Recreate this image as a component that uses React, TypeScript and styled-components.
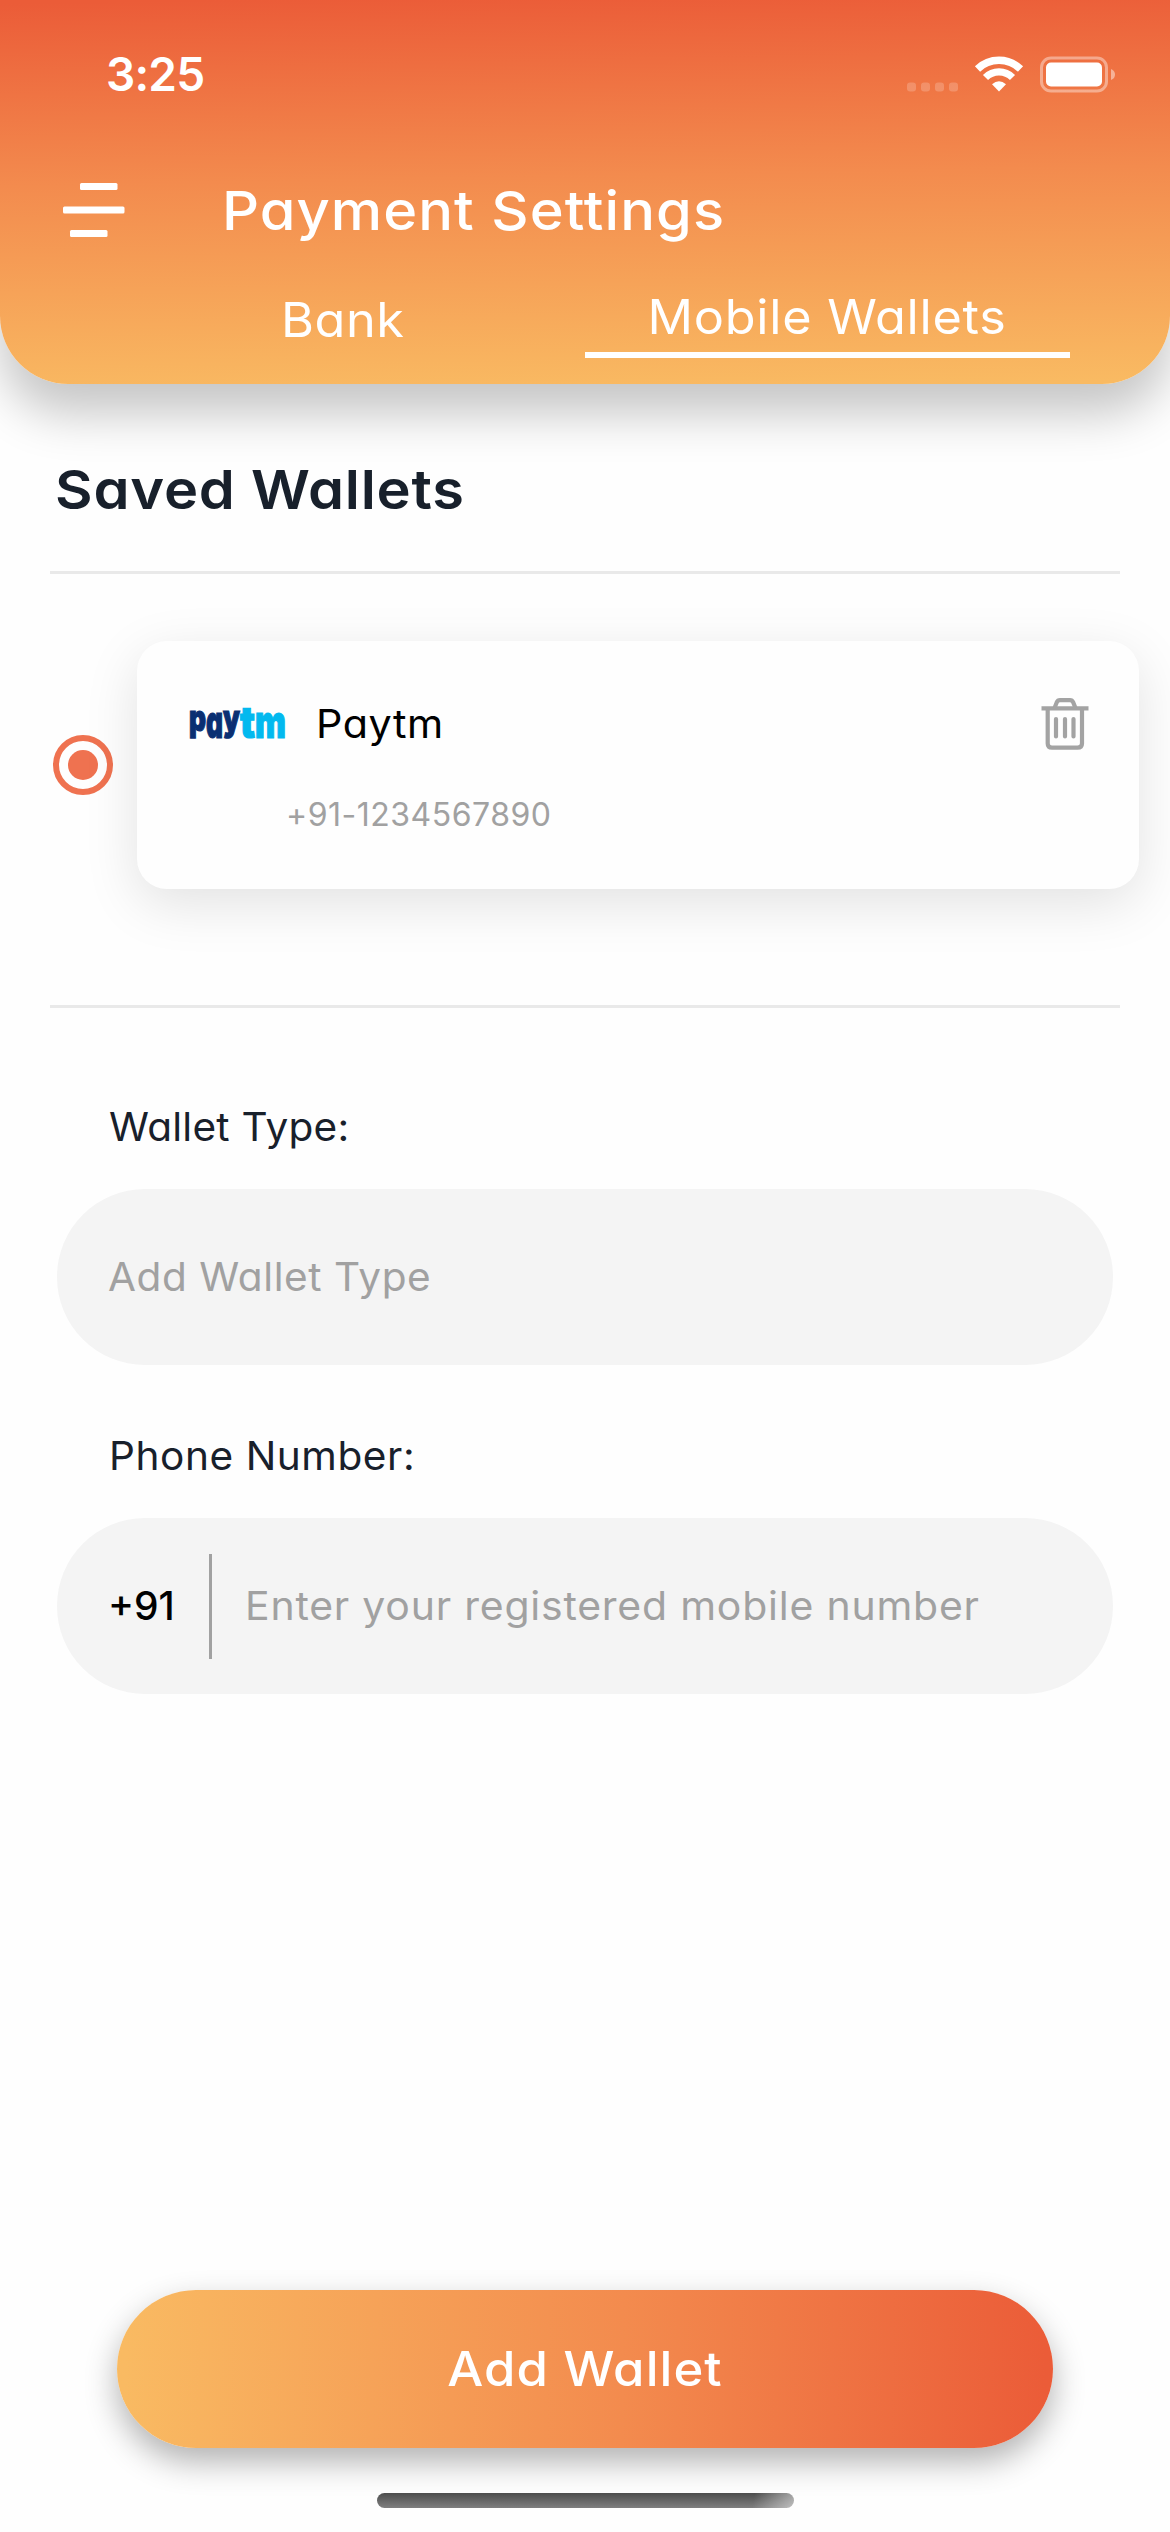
import React from "react";
import styled, { createGlobalStyle } from "styled-components";

const GlobalStyle = createGlobalStyle`
  * { box-sizing: border-box; }
  html, body { margin: 0; padding: 0; background: #fefefe; }
  body { font-family: "Inter", "Open Sans", sans-serif; }
`;

const Screen = styled.div`
  width: 1170px;
  height: 2532px;
  overflow: hidden;
  display: flex;
  flex-direction: column;
  background: #fefefe;
  font-feature-settings: "cv11";
`;

const Header = styled.header`
  height: 384px;
  flex: none;
  border-radius: 0 0 68px 68px;
  background: linear-gradient(179deg, #eb5c38 1%, #f38b4e 46%, #f9ba62 99%);
  box-shadow: 0 30px 48px rgba(0, 0, 0, 0.225);
  color: #fff;
`;

const StatusBar = styled.div`
  height: 149px;
  padding: 0 55px 0 106px;
  display: flex;
  align-items: center;
  justify-content: space-between;
`;

interface LabelProps {
  $size: number;
  $weight?: number;
  $spacing?: number;
  $stretch?: number;
  $centered?: boolean;
  $color?: string;
}

const Label = styled.span<LabelProps>`
  display: inline-block;
  font-size: ${(p) => p.$size}px;
  font-weight: ${(p) => p.$weight ?? 400};
  letter-spacing: ${(p) => p.$spacing ?? 0}px;
  color: ${(p) => p.$color ?? "inherit"};
  transform: scaleX(${(p) => p.$stretch ?? 1});
  transform-origin: ${(p) => (p.$centered ? "center" : "left")};
  line-height: 1.2;
  white-space: nowrap;
`;

const TitleRow = styled.div`
  height: 124px;
  padding-left: 63px;
  display: flex;
  align-items: center;
  gap: 97px;
`;

const Tabs = styled.nav`
  height: 85px;
  padding: 0 100px;
  display: grid;
  grid-template-columns: 1fr 1fr;
`;

const Tab = styled.div<{ $active?: boolean }>`
  display: flex;
  align-items: center;
  justify-content: center;
  padding-top: ${(p) => (p.$active ? 8 : 15)}px;
  border-bottom: 6px solid ${(p) => (p.$active ? "#fff" : "transparent")};
`;

const SectionTitle = styled.h1`
  margin: 0;
  height: 187px;
  padding: 25px 0 0 55px;
  display: flex;
  align-items: center;
  color: #18202b;
  font-weight: 600;
`;

const Divider = styled.div`
  height: 3px;
  flex: none;
  margin: 0 50px;
  background: #e9e9e9;
`;

const WalletRow = styled.div`
  height: 431px;
  padding: 67px 31px 116px 53px;
  display: flex;
  align-items: center;
  gap: 24px;
`;

const Radio = styled.div`
  width: 60px;
  height: 60px;
  flex: none;
  border: 6px solid #ef7250;
  border-radius: 50%;
  display: grid;
  place-items: center;
  &::after {
    content: "";
    width: 30px;
    height: 30px;
    border-radius: 50%;
    background: #ef7250;
  }
`;

const Card = styled.div`
  flex: 1;
  height: 248px;
  border-radius: 30px;
  background: #fefefe;
  box-shadow: 0 15px 54px rgba(0, 0, 0, 0.115);
  padding: 49px 50px 0 52px;
`;

const CardTop = styled.div`
  height: 68px;
  display: flex;
  align-items: center;
`;

const CardName = styled.div`
  flex: 1;
  padding-left: 29px;
  display: flex;
`;

const CardNumber = styled.div`
  height: 114px;
  padding-left: 97px;
  display: flex;
  align-items: center;
`;

const Form = styled.section`
  padding: 88px 57px 0;
  flex: 1;
`;

const FieldLabel = styled.div`
  height: 62px;
  padding-left: 52px;
  display: flex;
  align-items: center;
  color: #18202b;
`;

const Field = styled.div`
  height: 176px;
  margin: 31px 0 60px;
  padding: 0 0 0 51px;
  border-radius: 88px;
  background: #f4f4f4;
  display: flex;
  align-items: center;
`;

const CodeCell = styled.div`
  width: 104px;
  height: 105px;
  margin-right: 33px;
  border-right: 3px solid #a1a1a1;
  display: flex;
  align-items: center;
`;

const Footer = styled.footer`
  flex: none;
  height: 242px;
  display: flex;
  flex-direction: column;
  align-items: center;
  gap: 45px;
`;

const AddButton = styled.button`
  width: 936px;
  height: 158px;
  border: 0;
  padding: 0;
  border-radius: 79px;
  color: #fff;
  font-family: inherit;
  font-feature-settings: inherit;
  background: linear-gradient(91deg, #f9ba62 1%, #f38b4e 54%, #eb5c38 99%);
  box-shadow: 0 14px 32px rgba(0, 0, 0, 0.3);
`;

const HomeBar = styled.div`
  width: 417px;
  height: 15px;
  border-radius: 8px;
  background: linear-gradient(100deg, transparent 90%, rgba(255, 255, 255, 0.5) 100%),
    linear-gradient(#4d4d4d, #7f7f7f);
`;

const LogoSvg = styled.svg`
  overflow: visible;
  flex: none;
  font-family: "Inter", sans-serif;
  font-weight: 900;
`;

const MenuSvg = styled.svg`
  flex: none;
  margin-bottom: 2px;
`;

const StatusIcons = () => (
  <svg width="208" height="40" viewBox="907 54.5 208 40" fill="#fff">
    {[907, 921, 935, 949].map((x) => (
      <rect key={x} x={x} y="82" width="9" height="9" rx="3" opacity=".2" />
    ))}
    <g fill="none" stroke="#fff">
      <path d="M977.5 68.5A31 31 0 0 1 1020.500 68.500" strokeWidth="7.500" />
      <path d="M985.5 77A19 19 0 0 1 1012.500 77" strokeWidth="7.200" />
    </g>
    <path d="M999 91L992 83.800Q999 77.500 1006 83.800Z" />
    <rect x="1041.500" y="57.500" width="65" height="33" rx="9.500" fill="none" stroke="#fff" strokeWidth="3" opacity=".4" />
    <rect x="1046" y="62" width="56" height="24" rx="5" />
    <path d="M1111 68.500Q1115 70 1115 74T1111 79.500Z" opacity=".45" />
  </svg>
);

const MenuIcon = () => (
  <MenuSvg width="62" height="54" viewBox="0 0 62 54" fill="#fff">
    <rect x="17" y="0" width="37.500" height="7" rx="1.500" />
    <rect x="0" y="23.500" width="61.500" height="7" rx="1.500" />
    <rect x="7" y="47" width="37.500" height="7" rx="1.500" />
  </MenuSvg>
);

const LOGO_LETTERS = [
  { ch: "p", x: 0, y: 25, w: 17, size: 36, fill: "#0a2f72" },
  { ch: "a", x: 17, y: 32, w: 17, size: 46, fill: "#0a2f72" },
  { ch: "y", x: 34, y: 25, w: 17, size: 36, fill: "#0a2f72" },
  { ch: "t", x: 51, y: 32, w: 15, size: 43, fill: "#02b9ef" },
  { ch: "m", x: 66, y: 32, w: 31, size: 46, fill: "#02b9ef" },
];

const PaytmLogo = () => (
  <LogoSvg width="98" height="36" viewBox="0 0 98 36">
    <text>
      {LOGO_LETTERS.map((l) => (
        <tspan
          key={l.ch}
          x={l.x}
          y={l.y}
          fontSize={l.size}
          fill={l.fill}
          stroke={l.fill}
          strokeWidth="1.2"
          textLength={l.w}
          lengthAdjust="spacingAndGlyphs"
        >
          {l.ch}
        </tspan>
      ))}
    </text>
  </LogoSvg>
);

const TrashIcon = () => (
  <svg width="48" height="52" viewBox="0 0 48 52" fill="none" stroke="#a3a3a3" strokeWidth="4.2">
    <path d="M0.500 10.300H47.500" />
    <path d="M13.500 10L15.800 4.200Q16.700 2.100 19 2.100H29Q31.200 2.100 32.100 4.200L34.500 10" />
    <path d="M6.700 11V45.500Q6.700 49.700 11 49.700H36.500Q41 49.700 41 45.500V11" />
    <path d="M15 21V38.500M24 21V38.500M32.500 21V38.500" strokeLinecap="round" />
  </svg>
);

export default function App() {
  return (
    <Screen>
      <GlobalStyle />
      <Header>
        <StatusBar>
          <Label $size={46} $weight={600} $spacing={-0.8}>3:25</Label>
          <StatusIcons />
        </StatusBar>
        <TitleRow>
          <MenuIcon />
          <Label $size={54} $weight={500} $spacing={1} $stretch={1.07}>Payment Settings</Label>
        </TitleRow>
        <Tabs>
          <Tab>
            <Label $size={48} $spacing={0.5} $stretch={1.05} $centered>Bank</Label>
          </Tab>
          <Tab $active>
            <Label $size={48} $spacing={0.7} $stretch={1.05} $centered>Mobile Wallets</Label>
          </Tab>
        </Tabs>
      </Header>
      <SectionTitle>
        <Label $size={54} $weight={600} $spacing={0.75} $stretch={1.07}>Saved Wallets</Label>
      </SectionTitle>
      <Divider />
      <WalletRow>
        <Radio />
        <Card>
          <CardTop>
            <PaytmLogo />
            <CardName>
              <Label $size={39} $spacing={0.5} $stretch={1.06} $color="#000">Paytm</Label>
            </CardName>
            <TrashIcon />
          </CardTop>
          <CardNumber>
            <Label $size={32} $spacing={0.5} $color="#a1a1a1">+91-1234567890</Label>
          </CardNumber>
        </Card>
      </WalletRow>
      <Divider />
      <Form>
        <FieldLabel>
          <Label $size={39} $spacing={0.25} $stretch={1.04}>Wallet Type:</Label>
        </FieldLabel>
        <Field>
          <Label $size={39} $spacing={0.55} $stretch={1.04} $color="#a1a1a1">Add Wallet Type</Label>
        </Field>
        <FieldLabel>
          <Label $size={39} $spacing={0.55} $stretch={1.04}>Phone Number:</Label>
        </FieldLabel>
        <Field>
          <CodeCell>
            <Label $size={39} $weight={500} $color="#000">+91</Label>
          </CodeCell>
          <Label $size={39} $spacing={0.75} $stretch={1.05} $color="#a1a1a1">
            Enter your registered mobile number
          </Label>
        </Field>
      </Form>
      <Footer>
        <AddButton>
          <Label $size={48} $weight={500} $spacing={1} $stretch={1.06} $centered>Add Wallet</Label>
        </AddButton>
        <HomeBar />
      </Footer>
    </Screen>
  );
}
